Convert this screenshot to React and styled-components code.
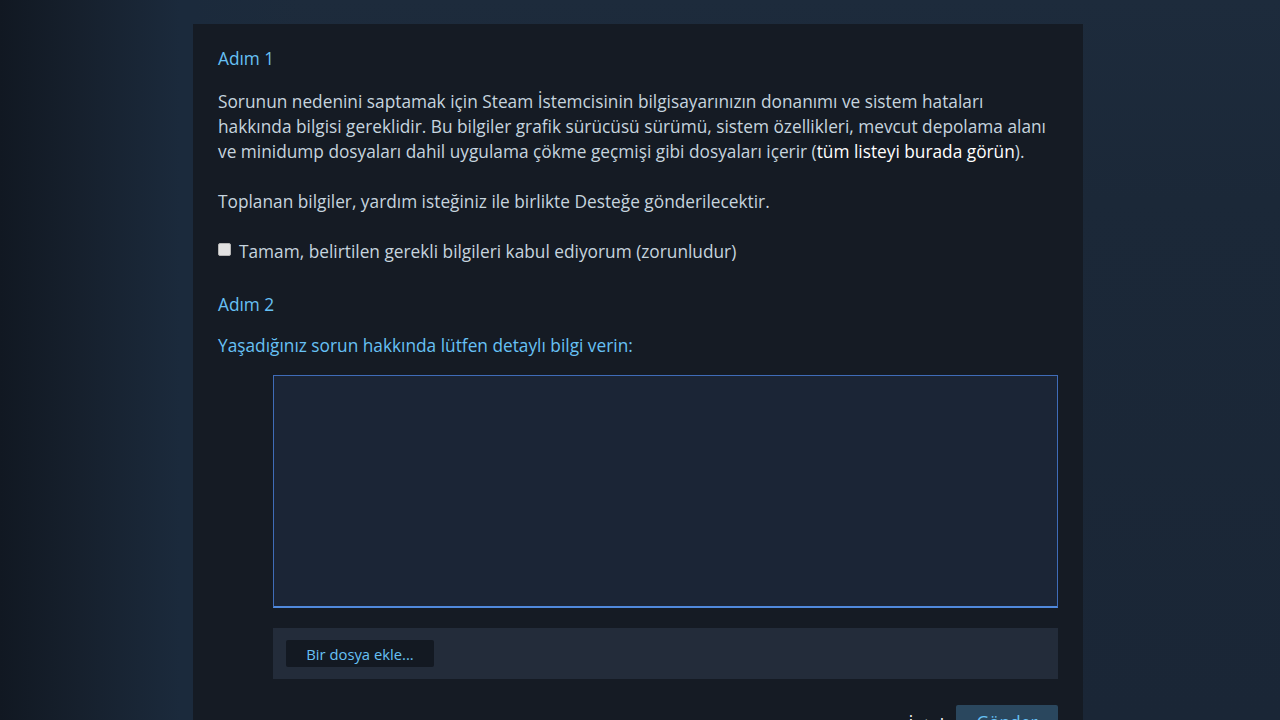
import React from "react";
import styled, { createGlobalStyle } from "styled-components";

const GlobalStyle = createGlobalStyle`
  html, body { margin: 0; padding: 0; }
  body {
    background: #1b2838;
    font-family: "Open Sans", "Noto Sans", "Liberation Sans", Arial, sans-serif;
  }
`;

const Page = styled.div`
  height: 720px;
  box-sizing: border-box;
  padding: 24px 0 0 193px;
  display: flex;
  justify-content: flex-start;
  overflow: hidden;
  background:
    linear-gradient(90deg, #111822 0px, #16202d 80px, #1b2a3c 180px, #1b2a3c 193px, rgba(27,40,56,0) 300px),
    linear-gradient(180deg, #1d2b3c 0px, #1b2838 200px, #1a2636 720px);
`;

const Panel = styled.div`
  width: 890px;
  box-sizing: border-box;
  background: #151b24;
  padding: 22px 25px 40px 25px;
  color: #c6d4df;
  font-size: 17.3px;
  line-height: 25px;
`;

const StepTitle = styled.div`
  color: #67c1f5;
  margin-top: ${(p) => p.$mt || 0}px;
`;

const Paragraph = styled.p`
  margin: ${(p) => p.$mt || 0}px 0 0 0;
`;

const Strong = styled.a`
  color: #ffffff;
  text-decoration: none;
  font-weight: 500;
`;

const CheckRow = styled.label`
  display: flex;
  align-items: center;
  gap: 8px;
  margin-top: 25px;
  cursor: pointer;
`;

const Check = styled.input`
  appearance: none;
  box-sizing: border-box;
  width: 13px;
  height: 13px;
  margin: 0 0 5px 0;
  background: #e2e2e2;
  border: 1px solid #b5b5b5;
  border-radius: 2px;
  &:checked {
    background: #67c1f5;
  }
`;

const Prompt = styled.div`
  color: #67c1f5;
  margin-top: 16px;
`;

const TextFrame = styled.div`
  box-sizing: border-box;
  width: 785px;
  height: 233px;
  margin: 17px 0 0 55px;
  border-style: solid;
  border-width: 1px 1px 2px 1px;
  border-color: #3f6cb8 #3f6cb8 #5089dc #3f6cb8;
  background: #1b2536;
`;

const TextArea = styled.textarea`
  display: block;
  box-sizing: border-box;
  width: 100%;
  height: 100%;
  margin: 0;
  background: transparent;
  border: none;
  outline: none;
  resize: none;
  color: #c6d4df;
  font-family: inherit;
  font-size: 14px;
`;

const AttachBar = styled.div`
  box-sizing: border-box;
  margin: 20px 0 0 55px;
  width: 785px;
  height: 51px;
  background: #232c3a;
  display: flex;
  align-items: center;
  padding-left: 13px;
`;

const SmallButton = styled.button`
  height: 27px;
  width: 148px;
  border: none;
  border-radius: 2px;
  background: #131922;
  color: #67c1f5;
  font-family: inherit;
  font-size: 14.8px;
  padding: 0;
  cursor: pointer;
`;

const Footer = styled.div`
  display: flex;
  justify-content: flex-end;
  align-items: flex-start;
  gap: 12px;
  margin-top: 26px;
`;

const CancelLink = styled.a`
  color: #ffffff;
  font-size: 17.3px;
  margin-top: 8px;
  text-decoration: none;
`;

const SendButton = styled.button`
  width: 102px;
  height: 34px;
  border: none;
  border-radius: 2px;
  background: #2a475e;
  color: #67c1f5;
  font-family: inherit;
  font-size: 17.3px;
  cursor: pointer;
`;

export default function App() {
  return (
    <>
      <GlobalStyle />
      <Page>
        <Panel>
          <StepTitle>Adım 1</StepTitle>
          <Paragraph $mt={18}>
            Sorunun nedenini saptamak için Steam İstemcisinin bilgisayarınızın donanımı ve sistem hataları hakkında bilgisi gereklidir. Bu bilgiler grafik sürücüsü sürümü, sistem özellikleri, mevcut depolama alanı ve minidump dosyaları dahil uygulama çökme geçmişi gibi dosyaları içerir (<Strong href="#">tüm listeyi burada görün</Strong>).
          </Paragraph>
          <Paragraph $mt={25}>
            Toplanan bilgiler, yardım isteğiniz ile birlikte Desteğe gönderilecektir.
          </Paragraph>
          <CheckRow>
            <Check type="checkbox" />
            <span>Tamam, belirtilen gerekli bilgileri kabul ediyorum (zorunludur)</span>
          </CheckRow>
          <StepTitle $mt={28}>Adım 2</StepTitle>
          <Prompt>Yaşadığınız sorun hakkında lütfen detaylı bilgi verin:</Prompt>
          <TextFrame>
            <TextArea />
          </TextFrame>
          <AttachBar>
            <SmallButton>Bir dosya ekle...</SmallButton>
          </AttachBar>
          <Footer>
            <CancelLink href="#">İptal</CancelLink>
            <SendButton>Gönder</SendButton>
          </Footer>
        </Panel>
      </Page>
    </>
  );
}
